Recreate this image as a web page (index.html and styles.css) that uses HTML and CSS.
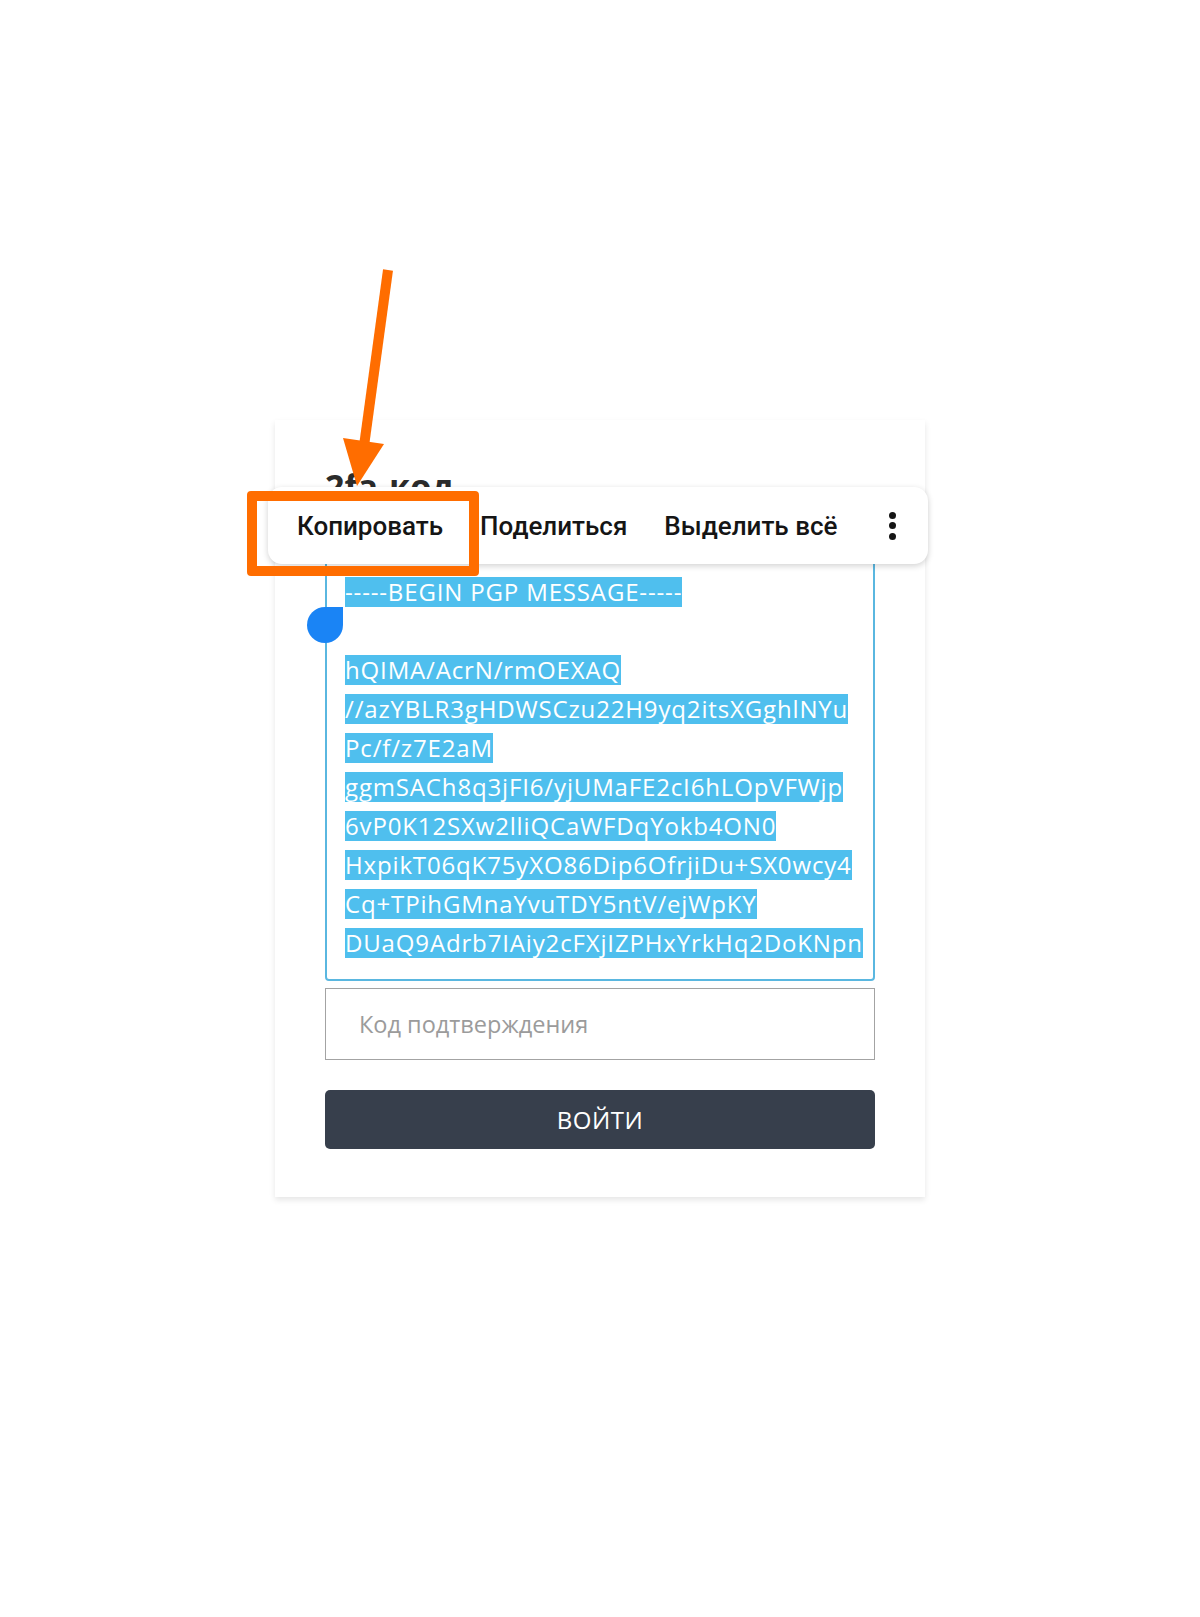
FILE: index.html
```html
<!DOCTYPE html>
<html lang="ru">
<head>
    <meta charset="UTF-8">
    <meta name="viewport" content="width=device-width, initial-scale=1.0">
    <title>2fa-код</title>
    <link rel="stylesheet" href="styles.css">
</head>
<body>
<div class="page">
    <div class="login-card">
        <h2 class="card-title">2fa-код</h2>
        <div class="pgp-box">
            <div class="pgp-line"><span class="sel">-----BEGIN PGP MESSAGE-----</span></div>
            <div class="pgp-line"></div>
            <div class="pgp-line"><span class="sel">hQIMA/AcrN/rmOEXAQ</span></div>
            <div class="pgp-line"><span class="sel">//azYBLR3gHDWSCzu22H9yq2itsXGghlNYu</span></div>
            <div class="pgp-line"><span class="sel">Pc/f/z7E2aM</span></div>
            <div class="pgp-line"><span class="sel">ggmSACh8q3jFI6/yjUMaFE2cI6hLOpVFWjp</span></div>
            <div class="pgp-line"><span class="sel">6vP0K12SXw2lliQCaWFDqYokb4ON0</span></div>
            <div class="pgp-line"><span class="sel">HxpikT06qK75yXO86Dip6OfrjiDu+SX0wcy4</span></div>
            <div class="pgp-line"><span class="sel">Cq+TPihGMnaYvuTDY5ntV/ejWpKY</span></div>
            <div class="pgp-line"><span class="sel">DUaQ9Adrb7IAiy2cFXjIZPHxYrkHq2DoKNpn</span></div>
        </div>
        <input class="code-input" type="text" placeholder="Код подтверждения">
        <button class="btn-login">ВОЙТИ</button>
    </div>

    <!-- poignée de sélection -->
    <div class="sel-handle"></div>

    <!-- menu contextuel -->
    <div class="text-toolbar">
        <span class="toolbar-item">Копировать</span>
        <span class="toolbar-item">Поделиться</span>
        <span class="toolbar-item">Выделить всё</span>
        <span class="toolbar-more"><i></i><i></i><i></i></span>
    </div>

    <!-- annotation -->
    <div class="hint-box"></div>
    <svg class="hint-arrow" width="1200" height="600" viewBox="0 0 1200 600">
        <line x1="388" y1="270" x2="364" y2="446" stroke="#ff6d00" stroke-width="10"/>
        <polygon points="343,438 384,444 357,486" fill="#ff6d00"/>
    </svg>
</div>
</body>
</html>
```

FILE: styles.css
```css
body {
    margin: 0;
    background-color: #ffffff;
    font-family: "Open Sans", Arial, sans-serif;
}

.page {
    position: relative;
    width: 1200px;
    min-height: 1617px;
    padding-top: 420px;
    box-sizing: border-box;
}

.login-card {
    width: 650px;
    margin: 0 auto;
    padding: 46px 50px 48px;
    box-sizing: border-box;
    background-color: #ffffff;
    box-shadow: 0 3px 6px rgba(0, 0, 0, 0.1);
}

.card-title {
    margin: 0;
    font-size: 34px;
    line-height: 40px;
    font-weight: 700;
    color: #2b2b2b;
}

.pgp-box {
    margin-top: 20px;
    border: 2px solid #5ab7e0;
    border-radius: 4px;
    padding: 49px 18px 12px;
}

.pgp-line {
    height: 39px;
    line-height: 30px;
    white-space: nowrap;
}

.sel {
    display: inline-block;
    vertical-align: top;
    line-height: 30px;
    font-size: 24px;
    letter-spacing: 0.85px;
    color: #ffffff;
    background-color: #4fbfee;
}

.code-input {
    display: block;
    width: 100%;
    height: 72px;
    margin-top: 7px;
    padding: 0 33px;
    box-sizing: border-box;
    border: 1px solid #a3a3a3;
    border-radius: 0;
    font-family: "Open Sans", Arial, sans-serif;
    font-size: 23.5px;
    color: #333;
    outline: none;
}

.code-input::placeholder {
    color: #9b9b9b;
}

.btn-login {
    display: block;
    width: 100%;
    height: 59px;
    margin-top: 30px;
    border: none;
    border-radius: 5px;
    background-color: #373f4c;
    color: #ffffff;
    font-family: "Open Sans", Arial, sans-serif;
    font-size: 24px;
    letter-spacing: 0.5px;
    cursor: pointer;
}

.sel-handle {
    position: absolute;
    left: 307px;
    top: 607px;
    width: 36px;
    height: 36px;
    background-color: #1a84f5;
    border-radius: 50% 0 50% 50%;
}

.text-toolbar {
    position: absolute;
    left: 268px;
    top: 487px;
    width: 660px;
    height: 77px;
    box-sizing: border-box;
    display: flex;
    align-items: center;
    padding-left: 29px;
    background-color: #ffffff;
    border-radius: 14px;
    box-shadow: 0 2px 6px rgba(0, 0, 0, 0.18);
    font-family: Roboto, Arial, sans-serif;
    font-size: 26px;
    font-weight: 500;
    color: #151515;
}

.toolbar-item {
    margin-right: 37px;
    white-space: nowrap;
}

.toolbar-more {
    margin-left: auto;
    margin-right: 32px;
    display: flex;
    flex-direction: column;
    gap: 3.5px;
}

.toolbar-more i {
    display: block;
    width: 7px;
    height: 7px;
    border-radius: 50%;
    background-color: #151515;
}

.hint-box {
    position: absolute;
    left: 247px;
    top: 491px;
    width: 232px;
    height: 85px;
    box-sizing: border-box;
    border: 10px solid #ff6d00;
    border-radius: 4px;
}

.hint-arrow {
    position: absolute;
    left: 0;
    top: 0;
    pointer-events: none;
}
```
